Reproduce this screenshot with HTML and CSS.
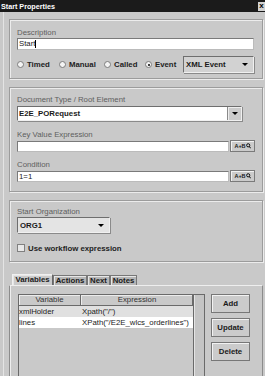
FILE: index.html
```html
<!DOCTYPE html>
<html lang="en">
<head>
  <meta charset="UTF-8" />
  <title>Start Properties</title>
  <link rel="stylesheet" href="styles.css">
</head>
<body>

<div class="window">
  <div class="titlebar">
    <span class="title">Start Properties</span>
    <span class="close">x</span>
  </div>

  <div class="content">

    <!-- description / start type -->
    <div class="group group-desc">
      <div class="label">Description</div>
      <div class="textbox">Start<span class="caret"></span></div>
      <div class="radio-row">
        <span class="radio r-timed"><i class="dot"></i>Timed</span>
        <span class="radio r-manual"><i class="dot"></i>Manual</span>
        <span class="radio r-called"><i class="dot"></i>Called</span>
        <span class="radio r-event"><i class="dot on"></i>Event</span>
        <div class="combo combo-event"><span>XML Event</span><i class="arrow"></i></div>
      </div>
    </div>

    <!-- document type -->
    <div class="group group-doc">
      <div class="label">Document Type / Root Element</div>
      <div class="combo combo-doc">
        <span>E2E_PORequest</span>
        <span class="arrow-btn"><i class="arrow"></i></span>
      </div>
      <div class="label label-gap">Key Value Expression</div>
      <div class="expr-row">
        <div class="textbox"></div>
        <span class="expr-btn">A+B<svg width="5" height="6" viewBox="0 0 5 6"><circle cx="2.2" cy="2.3" r="1.6" fill="none" stroke="#000" stroke-width="0.9"/><path d="M3.2 3.4 L4.7 5.3" stroke="#000" stroke-width="1"/></svg></span>
      </div>
      <div class="label label-gap2">Condition</div>
      <div class="expr-row">
        <div class="textbox">1=1</div>
        <span class="expr-btn">A+B<svg width="5" height="6" viewBox="0 0 5 6"><circle cx="2.2" cy="2.3" r="1.6" fill="none" stroke="#000" stroke-width="0.9"/><path d="M3.2 3.4 L4.7 5.3" stroke="#000" stroke-width="1"/></svg></span>
      </div>
    </div>

    <!-- organization -->
    <div class="group group-org">
      <div class="label">Start Organization</div>
      <div class="combo combo-org"><span>ORG1</span><i class="arrow"></i></div>
      <div class="check-row"><i class="checkbox"></i>Use workflow expression</div>
    </div>

    <!-- tabs -->
    <div class="tabs">
      <span class="tab tab-vars active">Variables</span>
      <span class="tab tab-actions">Actions</span>
      <span class="tab tab-next">Next</span>
      <span class="tab tab-notes">Notes</span>
    </div>
    <div class="tab-pane">
      <div class="table">
        <div class="viewport">
          <div class="row head">
            <span class="c1">Variable</span>
            <span class="c2">Expression</span>
          </div>
          <div class="row odd">
            <span class="c1">xmlHolder</span>
            <span class="c2">Xpath("/")</span>
          </div>
          <div class="row">
            <span class="c1">lines</span>
            <span class="c2">XPath("/E2E_wlcs_orderlines")</span>
          </div>
        </div>
        <div class="scrollbar"></div>
      </div>
      <div class="buttons">
        <button>Add</button>
        <button>Update</button>
        <button>Delete</button>
      </div>
    </div>

  </div>
</div>

</body>
</html>
```

FILE: styles.css
```css
* { box-sizing: border-box; }
html, body {
  margin: 0; padding: 0;
  width: 265px; height: 376px;
  overflow: hidden;
  background: #c9c9c9;
}
body {
  font-family: "Liberation Sans", Arial, sans-serif;
  font-size: 7.8px;
  color: #1a1a1a;
}
.titlebar {
  height: 12px;
  background: #1b1b1b;
  color: #fff;
  display: flex;
  align-items: center;
  justify-content: space-between;
  padding-left: 1px;
}
.title {
  font-weight: bold;
  font-size: 7.2px;
}
.close {
  width: 7px;
  height: 9px;
  background: #d2d2d2;
  color: #000;
  font-weight: bold;
  font-size: 8px;
  line-height: 8px;
  text-align: center;
}
.content {
  margin-left: 3px;
  border-left: 1px solid #e4e4e4;
  padding: 7px 2px 0 5px;
  height: 364px;
  overflow: hidden;
}
.group {
  border: 1px solid #9c9c9c;
  box-shadow: inset 1px 1px 0 #ececec, 1px 1px 0 #ececec;
  padding: 0 8px 0 7px;
}
.group-desc { padding-top: 8px; padding-bottom: 5px; margin-bottom: 8px; }
.group-doc { padding-top: 7px; padding-bottom: 9px; margin-bottom: 8px; }
.group-org { padding-top: 6px; padding-bottom: 8px; }

.label {
  color: #5e5e5e;
  height: 10px;
  line-height: 10px;
}
.label-gap { margin-top: 9px; }
.label-gap2 { margin-top: 8px; }

.textbox {
  height: 12px;
  background: #fff;
  border: 1px solid #7a7a7a;
  border-right-color: #bbb;
  border-bottom-color: #bbb;
  padding-left: 1px;
  line-height: 10px;
  display: flex;
  align-items: center;
}
.caret {
  width: 1px;
  height: 8px;
  background: #000;
}

.radio-row {
  margin-top: 6px;
  height: 17px;
  display: flex;
  align-items: center;
}
.radio {
  display: flex;
  align-items: center;
  font-weight: bold;
  color: #222;
}
.r-timed { width: 42px; }
.r-manual { width: 45px; }
.r-called { width: 41px; }
.r-event { width: 38px; }
.dot {
  width: 7px; height: 7px;
  border-radius: 50%;
  border: 1px solid #7c7c7c;
  background: #f4f4f4;
  margin-right: 3px;
  position: relative;
}
.dot.on::after {
  content: "";
  position: absolute;
  left: 1.5px; top: 1.5px;
  width: 2px; height: 2px;
  border-radius: 50%;
  background: #000;
}

.combo {
  display: flex;
  align-items: center;
  justify-content: space-between;
  font-weight: bold;
  border: 1px solid #6e6e6e;
  border-right-color: #f0f0f0;
  border-bottom-color: #f0f0f0;
  box-shadow: 1px 1px 0 #8a8a8a;
}
.arrow {
  width: 0; height: 0;
  border-left: 3px solid transparent;
  border-right: 3px solid transparent;
  border-top: 3px solid #000;
}
.combo-event {
  width: 71px;
  height: 17px;
  background: #d2d2d2;
  padding: 0 5px 0 2px;
}
.combo-doc {
  width: 225px;
  height: 15px;
  margin-top: 1px;
  background: #fff;
  padding-left: 1px;
}
.arrow-btn {
  width: 14px;
  height: 13px;
  background: #cbcbcb;
  border-left: 1px solid #8a8a8a;
  box-shadow: inset 1px 1px 0 #eee;
  display: flex;
  align-items: center;
  justify-content: center;
}
.combo-org {
  width: 93px;
  height: 16px;
  background: #e4e4e4;
  padding: 0 5px 0 2px;
}

.expr-row {
  display: flex;
  height: 12px;
  margin-right: -1px;
}
.expr-row .textbox { flex: 1; height: 11px; margin-top: 1px; }
.expr-btn {
  width: 25px;
  height: 12px;
  margin-left: 1px;
  background: #cbcbcb;
  border: 1px solid #7a7a7a;
  box-shadow: inset 1px 1px 0 #f2f2f2;
  font-size: 5.5px;
  font-weight: bold;
  display: flex;
  align-items: center;
  justify-content: center;
}

.check-row {
  margin-top: 10px;
  height: 10px;
  display: flex;
  align-items: center;
  font-weight: bold;
  color: #222;
}
.checkbox {
  width: 8px; height: 8px;
  border: 1px solid #808080;
  background: #e8e8e8;
  margin-right: 3px;
}

.tabs {
  margin-top: 12px;
  height: 11px;
  display: flex;
  align-items: flex-end;
  padding-left: 3px;
}
.tab {
  height: 10px;
  line-height: 9px;
  font-size: 7.8px;
  font-weight: bold;
  text-align: center;
  background: #b6b6b6;
  border: 1px solid #777;
  border-bottom: none;
  box-shadow: inset 1px 1px 0 #e6e6e6;
}
.tab.active {
  height: 11px;
  background: #cbcbcb;
  border-color: #f0f0f0 #666 transparent #f0f0f0;
}
.tab-vars { width: 41px; }
.tab-actions { width: 34px; }
.tab-next { width: 23px; }
.tab-notes { width: 27px; }

.tab-pane {
  border: 1px solid #8c8c8c;
  border-top-color: #eeeeee;
  border-bottom: none;
  box-shadow: inset 1px 0 0 #eee;
  padding: 8px 0 0 8px;
  height: 91px;
  overflow: hidden;
  display: flex;
}
.table {
  width: 187px;
  height: 90px;
  border: 1px solid #6a6a6a;
  display: flex;
}
.viewport { flex: 1; }
.scrollbar {
  width: 11px;
  background: #c4c4c4;
  border-left: 1px solid #6a6a6a;
  box-shadow: inset 1px 0 0 #e4e4e4;
}
.row {
  display: flex;
  height: 11px;
  line-height: 11px;
  background: #fff;
  color: #222;
}
.row.odd { background: #e0e0e0; }
.row .c1 { width: 62px; white-space: nowrap; overflow: hidden; }
.row .c2 { flex: 1; padding-left: 1px; white-space: nowrap; overflow: hidden; }
.row.head { background: #c9c9c9; color: #333; }
.row.head span {
  text-align: center;
  border-right: 1px solid #6a6a6a;
  border-bottom: 1px solid #6a6a6a;
  box-shadow: inset 1px 1px 0 #ececec;
  line-height: 10px;
}

.buttons {
  margin-left: 6px;
  display: flex;
  flex-direction: column;
  gap: 5px;
}
button {
  width: 39px;
  height: 19px;
  padding: 0;
  font-family: "Liberation Sans", Arial, sans-serif;
  font-size: 7.8px;
  font-weight: bold;
  color: #1a1a1a;
  background: #cbcbcb;
  border: 1px solid #777;
  box-shadow: inset 1px 1px 0 #f2f2f2;
}
```
